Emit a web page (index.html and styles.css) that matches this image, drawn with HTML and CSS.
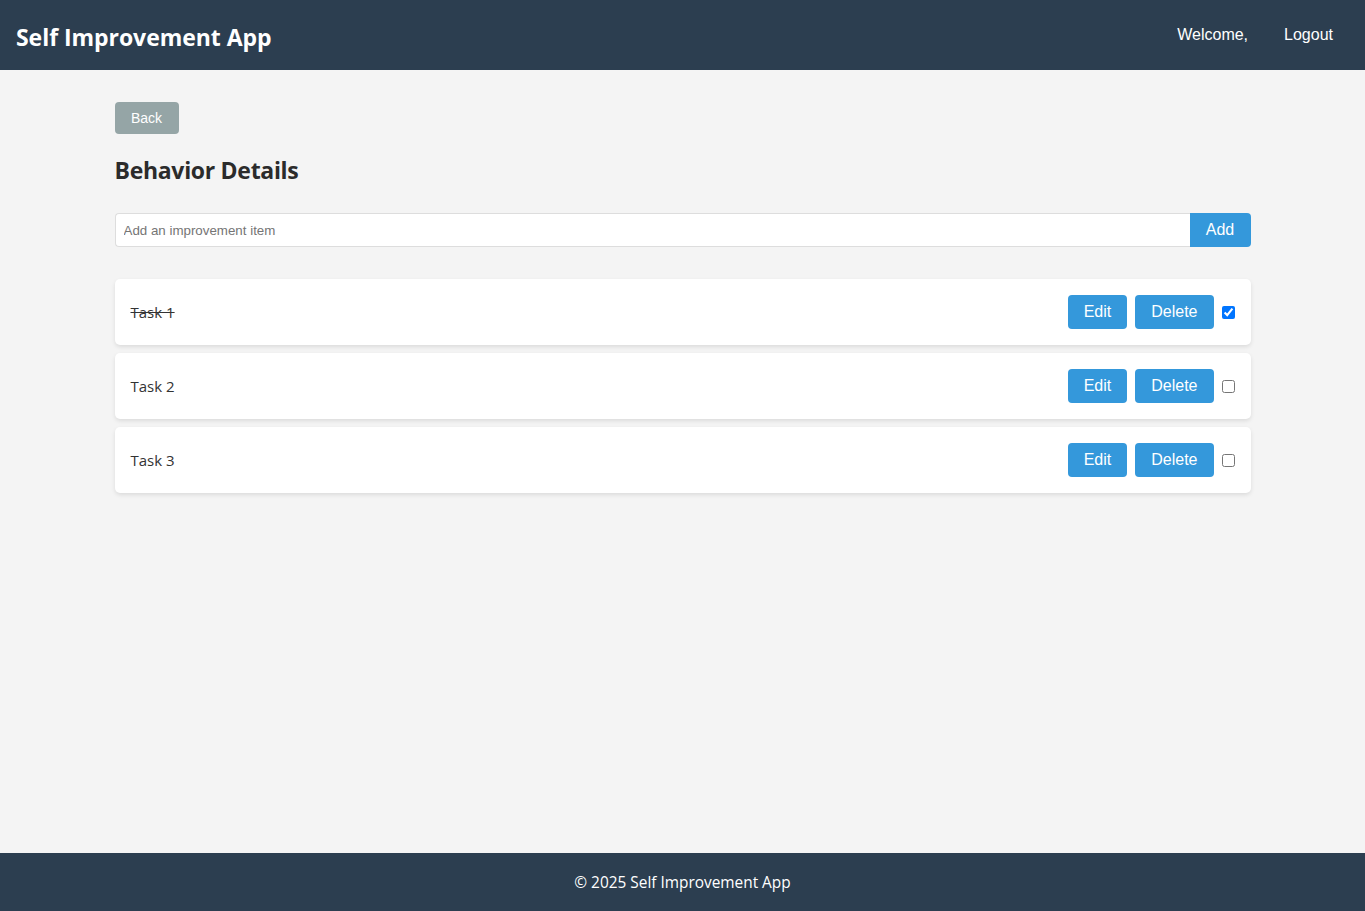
FILE: index.html
```html
<!DOCTYPE html>
<html>
<head>
<meta charset="utf-8">
<title>Self Improvement App</title>
<link rel="stylesheet" href="styles.css">
</head>
<body>
<div class="page">
  <header class="header">
    <div class="brand">Self Improvement App</div>
    <nav class="nav">
      <span class="welcome">Welcome,</span>
      <a class="logout" href="#">Logout</a>
    </nav>
  </header>
  <main class="main">
    <div class="container">
      <button class="back-btn">Back</button>
      <h2 class="title">Behavior Details</h2>
      <form class="add-form">
        <input class="add-input" type="text" placeholder="Add an improvement item">
        <button class="add-btn" type="button">Add</button>
      </form>
      <ul class="list">
        <li class="item">
          <span class="item-text done">Task 1</span>
          <div class="actions">
            <button class="btn">Edit</button>
            <button class="btn">Delete</button>
            <input class="check" type="checkbox" checked>
          </div>
        </li>
        <li class="item">
          <span class="item-text">Task 2</span>
          <div class="actions">
            <button class="btn">Edit</button>
            <button class="btn">Delete</button>
            <input class="check" type="checkbox">
          </div>
        </li>
        <li class="item">
          <span class="item-text">Task 3</span>
          <div class="actions">
            <button class="btn">Edit</button>
            <button class="btn">Delete</button>
            <input class="check" type="checkbox">
          </div>
        </li>
      </ul>
    </div>
  </main>
  <footer class="footer">© 2025 Self Improvement App</footer>
</div>
</body>
</html>
```
FILE: styles.css
```css
* { box-sizing: border-box; }
html, body { margin: 0; padding: 0; height: 100%; }
body {
  background: #f4f4f4;
  font-family: "Open Sans", "Noto Sans", sans-serif;
  color: #333;
}
.page {
  min-height: 911px;
  display: flex;
  flex-direction: column;
}
.header {
  height: 70px;
  background: #2c3e50;
  color: #fff;
  display: flex;
  align-items: center;
  justify-content: space-between;
  padding: 0 32px 0 16px;
}
.brand {
  font-size: 23px;
  font-weight: 700;
  letter-spacing: -0.05px;
  margin-top: 4px;
}
.nav {
  display: flex;
  gap: 36px;
  font-family: "Liberation Sans", Arial, sans-serif;
  font-size: 16px;
}
.welcome { color: #fff; }
.logout { color: #fff; text-decoration: none; }
.main { flex: 1; padding-top: 32px; }
.container {
  width: 1136px;
  margin: 0 auto;
}
.back-btn {
  display: block;
  width: 64px;
  height: 32px;
  padding: 0;
  background: #95a5a6;
  color: #fff;
  border: none;
  border-radius: 4px;
  font-family: "Liberation Sans", Arial, sans-serif;
  font-size: 14px;
}
.title {
  margin: 20px 0 26px;
  font-size: 23px;
  line-height: 33px;
  font-weight: 700;
  color: #2b2b2b;
  letter-spacing: -0.3px;
}
.add-form {
  display: flex;
  margin: 0 0 32px;
}
.add-input {
  flex: 1;
  height: 34px;
  padding: 0 8px;
  border: 1px solid #ddd;
  border-right: none;
  border-radius: 4px 0 0 4px;
  font-family: "Liberation Sans", Arial, sans-serif;
  font-size: 13.33px;
  background: #fff;
  outline: none;
}
.add-input::placeholder { color: #757575; }
.add-btn {
  width: 61px;
  height: 34px;
  border: none;
  background: #3498db;
  color: #fff;
  border-radius: 0 4px 4px 0;
  font-family: "Liberation Sans", Arial, sans-serif;
  font-size: 16px;
}
.list {
  list-style: none;
  margin: 0;
  padding: 0;
  display: flex;
  flex-direction: column;
  gap: 8px;
}
.item {
  height: 66px;
  background: #fff;
  border-radius: 5px;
  box-shadow: 0 2px 4px rgba(0,0,0,0.1);
  padding: 0 16px;
  display: flex;
  align-items: center;
  justify-content: space-between;
}
.item-text {
  font-size: 15px;
  color: #333;
}
.item-text.done { text-decoration: line-through; }
.actions {
  display: flex;
  align-items: center;
}
.btn {
  height: 34px;
  padding: 0 16px;
  margin-left: 8px;
  background: #3498db;
  color: #fff;
  border: none;
  border-radius: 4px;
  font-family: "Liberation Sans", Arial, sans-serif;
  font-size: 16px;
}
.check {
  width: 13px;
  height: 13px;
  margin: 0 0 0 8px;
}
.footer {
  height: 58px;
  background: #2c3e50;
  color: #fff;
  display: flex;
  align-items: center;
  justify-content: center;
  font-size: 15.4px;
}
```
